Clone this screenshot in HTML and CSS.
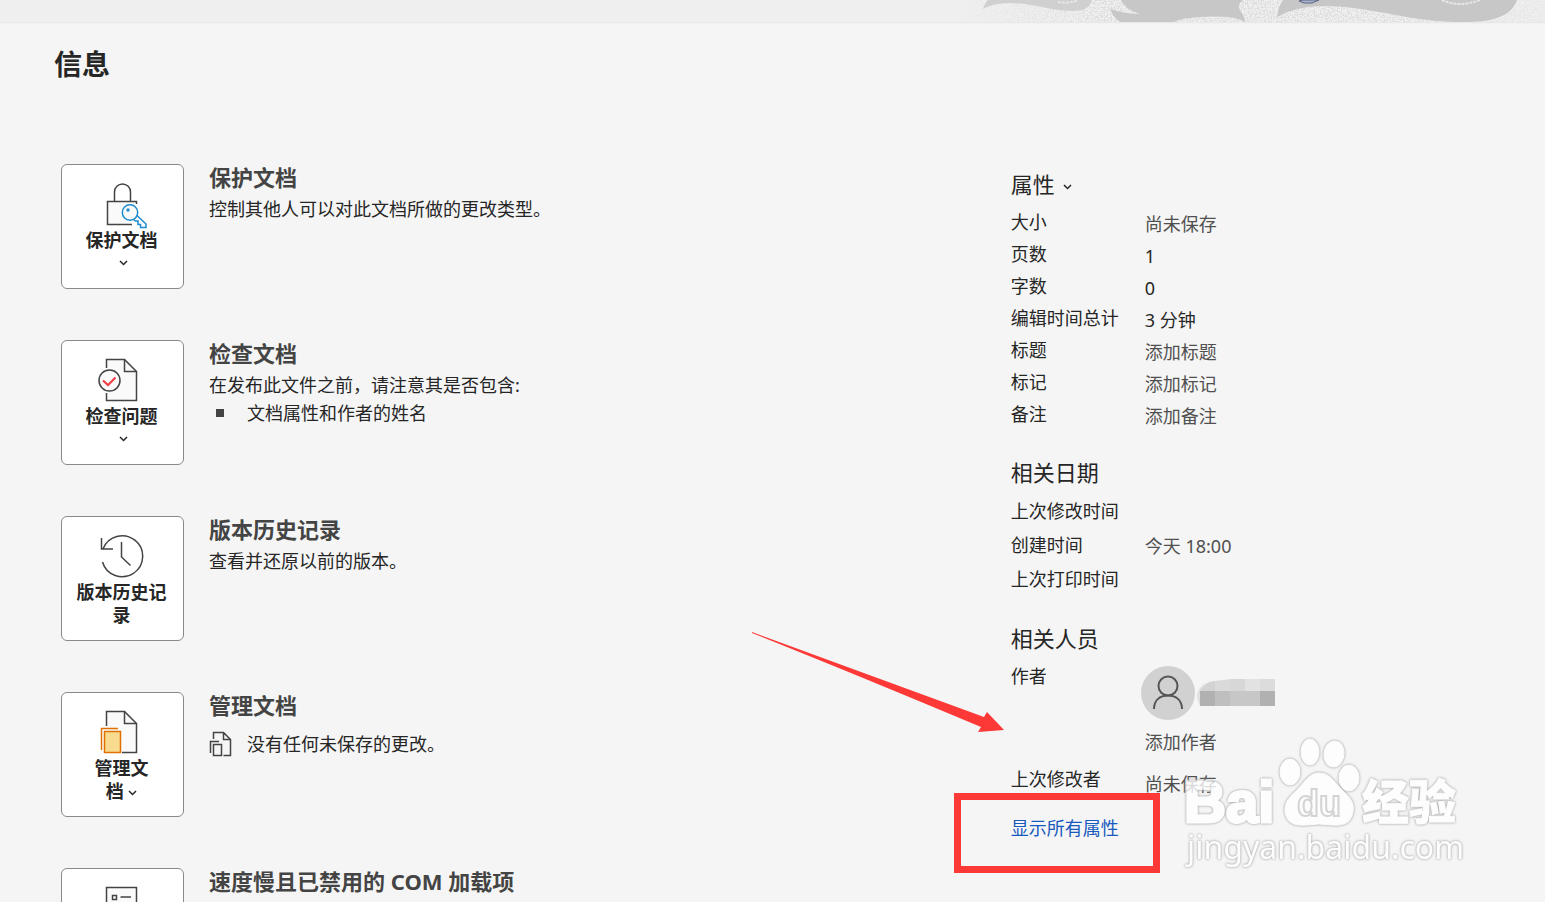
FILE: index.html
```html
<!DOCTYPE html>
<html lang="zh-CN">
<head>
    <meta charset="utf-8" />
    <meta name="viewport" content="width=device-width, initial-scale=1" />
    <title>信息</title>
    <link rel="stylesheet" href="styles.css">
</head>
<body>
    <header class="banner">
        <svg class="banner-art" width="585" height="22" viewBox="0 0 585 22" aria-hidden="true">
            <defs>
                <filter id="grain" x="0" y="0" width="100%" height="100%">
                    <feTurbulence type="fractalNoise" baseFrequency="0.7" numOctaves="2" seed="4" />
                    <feColorMatrix values="0 0 0 0 0.7  0 0 0 0 0.7  0 0 0 0 0.7  8 0 0 0 -3.8" />
                </filter>
                <linearGradient id="fade">
                    <stop offset="0" stop-color="#fff" stop-opacity="0" />
                    <stop offset="0.25" stop-color="#fff" stop-opacity="0.9" />
                    <stop offset="0.8" stop-color="#fff" stop-opacity="0.9" />
                    <stop offset="1" stop-color="#fff" stop-opacity="0.3" />
                </linearGradient>
                <mask id="grain-mask"><rect width="585" height="22" fill="url(#fade)" /></mask>
            </defs>
            <g mask="url(#grain-mask)"><rect width="585" height="22" filter="url(#grain)" /></g>
            <path d="M23 9C24 5 26 2 28 0H132C130 6 127 11 112 11C90 11 78 4 50 3Q33 3 23 9Z" fill="#d0d0d0" />
            <path d="M150 9Q165 14 180 14Q164 9 161 0H283Q276 5 281 12Q285 17 285 22Q275 15 240 17Q222 18 213 22H160Q153 17 150 9Z" fill="#c7c7c7" />
            <path d="M317 17Q318 7 323 0H557Q552 15 530 20Q505 24 468 20C420 15 360 -7 317 17Z" fill="#c7c7c7" />
            <path d="M98 2Q108 4 118 0M482 0Q499 8 520 0" fill="none" stroke="#e6e6e6" stroke-width="2" stroke-dasharray="3 1" />
            <path d="M339 1L343 0H359L352 3H344Z" fill="#a9b2cc" stroke="#5c6480" />
        </svg>
    </header>

    <main>
        <h1>信息</h1>
        <div class="columns">
            <div class="sections">
                <section class="section">
                    <button class="tile">
                        <svg class="icon" viewBox="0 0 52 48">
                            <path d="M18.500 20V11a8 8 0 0 1 16 0V20" />
                            <path class="paper" d="M40.500 23V20.500H11.500V43.500H36" />
                            <g class="key">
                                <path d="M40.500 34L50 43V46.500H44.500V43.500H42V40H39.500L37.500 38.500" />
                                <circle cx="34" cy="31.500" r="7.700" />
                                <circle cx="32" cy="29" r="1" />
                            </g>
                        </svg>
                        <span>保护文档</span>
                        <svg class="chevron" viewBox="0 0 9 6"><path d="M1 1l3.500 3.500L8 1" /></svg>
                    </button>
                    <div>
                        <h2>保护文档</h2>
                        <p>控制其他人可以对此文档所做的更改类型。</p>
                    </div>
                </section>

                <section class="section">
                    <button class="tile">
                        <svg class="icon" viewBox="0 0 52 48">
                            <path class="paper" d="M10.500 11V2.500H28.500L40.500 14.500V43.500H10.500V36" />
                            <path d="M28.500 2.500V14.500H40.500" />
                            <circle class="paper" cx="13.500" cy="23.500" r="10.500" />
                            <path class="tick" d="M7 23.500L12 28L19.500 20.500" />
                        </svg>
                        <span>检查问题</span>
                        <svg class="chevron" viewBox="0 0 9 6"><path d="M1 1l3.500 3.500L8 1" /></svg>
                    </button>
                    <div>
                        <h2>检查文档</h2>
                        <p>在发布此文件之前，请注意其是否包含:</p>
                        <ul>
                            <li>文档属性和作者的姓名</li>
                        </ul>
                    </div>
                </section>

                <section class="section">
                    <button class="tile">
                        <svg class="icon" viewBox="0 0 52 48">
                            <path d="M7 16A20.500 20.500 0 1 1 6.500 29" />
                            <path d="M5.500 5V16H17M25.500 9V24L34.500 32.500" />
                        </svg>
                        <span>版本历史记录</span>
                    </button>
                    <div>
                        <h2>版本历史记录</h2>
                        <p>查看并还原以前的版本。</p>
                    </div>
                </section>

                <section class="section">
                    <button class="tile">
                        <svg class="icon" viewBox="0 0 52 48">
                            <path class="paper" d="M10.500 17V2.500H28.500L40.500 14.500V43.500H26" />
                            <path d="M28.500 2.500V14.500H40.500" />
                            <path class="copy" d="M8.500 22.500H24.500V43.500H8.500Z" />
                            <path class="copy-back" d="M22 19.500H5.500V41" />
                        </svg>
                        <span class="narrow">管理文档 <svg class="chevron" viewBox="0 0 9 6"><path d="M1 1l3.500 3.500L8 1" /></svg></span>
                    </button>
                    <div>
                        <h2>管理文档</h2>
                        <div class="status">
                            <svg width="24" height="26" viewBox="0 0 24 26">
                                <path d="M4.500 8V1.500H14.500L21.500 8.500V24.500H14.500M14.500 1.500V8.500H21.500M4.500 13.500H12.500V24.500H4.500ZM10 10.500H1.500V22" />
                            </svg>
                            <span>没有任何未保存的更改。</span>
                        </div>
                    </div>
                </section>

                <section class="section">
                    <button class="tile" aria-label="管理 COM 加载项">
                        <svg class="icon" viewBox="0 0 52 48">
                            <path class="paper" d="M10.500 2.500H40.500V43.500H10.500Z" />
                            <path d="M16.500 10.500H20.500V14.500H16.500ZM24.500 12H35M16.500 20.500H20.500V24.500H16.500ZM24.500 22H35" />
                        </svg>
                    </button>
                    <div>
                        <h2>速度慢且已禁用的 COM 加载项</h2>
                    </div>
                </section>
            </div>

            <aside class="properties">
                <button class="group-title">属性 <svg class="chevron" viewBox="0 0 9 6"><path d="M1 1l3.500 3.500L8 1" /></svg></button>
                <table>
                    <tr><th>大小</th><td class="muted">尚未保存</td></tr>
                    <tr><th>页数</th><td>1</td></tr>
                    <tr><th>字数</th><td>0</td></tr>
                    <tr><th>编辑时间总计</th><td>3 分钟</td></tr>
                    <tr><th>标题</th><td class="muted">添加标题</td></tr>
                    <tr><th>标记</th><td class="muted">添加标记</td></tr>
                    <tr><th>备注</th><td class="muted">添加备注</td></tr>
                </table>

                <h3 class="group-title">相关日期</h3>
                <table class="dates">
                    <tr><th>上次修改时间</th><td></td></tr>
                    <tr><th>创建时间</th><td class="muted">今天 18:00</td></tr>
                    <tr><th>上次打印时间</th><td></td></tr>
                </table>

                <h3 class="group-title">相关人员</h3>
                <table class="people">
                    <tr>
                        <th>作者</th>
                        <td class="muted">
                            <div class="author">
                                <svg width="54" height="54" viewBox="0 0 54 54">
                                    <circle cx="27" cy="27" r="27" fill="#d1d1d1" />
                                    <g fill="none" stroke="#555" stroke-width="2">
                                        <circle cx="27" cy="20" r="9.500" />
                                        <path d="M13 43C13 34 19 29.500 27 29.500S41 34 41 43" />
                                    </g>
                                </svg>
                                <svg width="78" height="30" viewBox="0 0 78 30">
                                    <path d="M3 28Q0 23 0 17Q3 4 18 3L33 1V28Z" fill="#e0e0e0" />
                                    <path d="M3 13Q8 4 18 3V13Z" fill="#d3d3d3" />
                                    <path d="M18 3L33 2V13H18Z" fill="#dadada" />
                                    <path d="M33 1H48V13H33Z" fill="#d7d7d7" />
                                    <path d="M48 1H63V13H48Z" fill="#e2e2e2" />
                                    <path d="M63 1H78V13H63Z" fill="#dcdcdc" />
                                    <path d="M3 13H18V28H3ZM63 13H78V28H63Z" fill="#b1b1b1" />
                                    <path d="M18 13H33V28H18Z" fill="#bfbfbf" />
                                    <path d="M33 13H63V28H33Z" fill="#c7c7c7" />
                                </svg>
                            </div>
                            添加作者
                        </td>
                    </tr>
                    <tr><th>上次修改者</th><td class="muted">尚未保存</td></tr>
                </table>
                <a class="show-all" href="#">显示所有属性</a>

                <div class="highlight"></div>
                <svg class="arrow" width="254" height="104" viewBox="0 0 254 104">
                    <path d="M2 2L234 87L237 82L254 100L228 102L231 97Q100 42 2 3Z" fill="#fc3936" />
                </svg>
                <svg class="watermark" width="290" height="140" viewBox="0 0 290 140">
                    <g class="wm">
                        <text class="wm-logo" x="4" y="87">Bai</text>
                        <ellipse cx="110" cy="37" rx="10" ry="13" />
                        <ellipse cx="130" cy="17" rx="9" ry="13" />
                        <ellipse cx="154" cy="19" rx="10" ry="13" transform="rotate(8 154 19)" />
                        <ellipse cx="169" cy="43" rx="10" ry="13" />
                        <path d="M139 38C149 38 153 45 160 53C168 61 175 66 173 77C170 94 155 90 139 89C123 90 108 94 105 77C104 66 111 61 119 53C126 45 130 38 139 38Z" />
                        <text class="wm-cjk" x="182" y="84">经验</text>
                        <text class="wm-url" x="7" y="124">jingyan.baidu.com</text>
                    </g>
                    <text class="wm-du" x="117" y="81">du</text>
                </svg>
            </aside>
        </div>
    </main>
</body>
</html>
```
FILE: styles.css
```css
html, body {
    margin: 0;
    height: 100%;
}

body {
    overflow: hidden;
    background-color: #f5f5f5;
    color: #262626;
    font: 18px "Noto Sans", "Noto Sans CJK SC", sans-serif;
}

h1, h2, h3, p, ul {
    margin: 0;
    padding: 0;
}

button {
    color: inherit;
    font: inherit;
    cursor: pointer;
}

.banner {
    display: flex;
    justify-content: flex-end;
    height: 22px;
    background-color: #efefef;
    box-shadow: 0 0 2px #ccc;
    overflow: hidden;
}

main {
    padding: 22px 0 0 54px;
}

h1 {
    font-size: 28px;
    line-height: 40px;
}

.columns {
    display: grid;
    grid-template-columns: 16fr 9fr;
    margin-top: 80px;
    padding-left: 7px;
}

.sections {
    display: flex;
    flex-direction: column;
    gap: 51px;
}

.section {
    display: flex;
    gap: 25px;
}

.tile {
    display: flex;
    flex-direction: column;
    align-items: center;
    flex: none;
    box-sizing: border-box;
    width: 123px;
    height: 125px;
    padding: 16px 13px 0 11px;
    border: 1px solid #8a8a8a;
    border-radius: 6px;
    background-color: #fff;
    font-weight: bold;
    line-height: 23px;
}

.tile .narrow {
    width: 64px;
}

svg {
    flex: none;
}

.icon {
    width: 52px;
    height: 48px;
    fill: none;
    stroke: #444;
    stroke-width: 1.5;
}

.icon .paper {
    fill: #fafafa;
}

.icon .key {
    fill: #fafafa;
    stroke: #1e8bcd;
}

.icon .tick {
    stroke: #f03a45;
    stroke-width: 2;
}

.icon .copy {
    fill: #f9db8f;
    stroke: #e07000;
}

.icon .copy-back {
    stroke: #e07000;
}

.chevron {
    width: 9px;
    height: 6px;
    fill: none;
    stroke: #262626;
    stroke-width: 1.5;
}

.tile > .chevron {
    margin: 8px 0 0 3px;
}

.narrow .chevron {
    vertical-align: middle;
}

h2 {
    margin-bottom: 5px;
    color: #444;
    font-size: 22px;
    line-height: 26px;
}

p, li {
    line-height: 28px;
}

ul {
    list-style: none;
}

li {
    display: flex;
    align-items: center;
    gap: 23px;
    padding-left: 7px;
}

li::before {
    content: "";
    width: 8px;
    height: 8px;
    background-color: #444;
}

.status {
    display: flex;
    align-items: center;
    gap: 14px;
    margin-top: 12px;
    line-height: 28px;
}

.status svg {
    fill: none;
    stroke: #444;
    stroke-width: 1.5;
}

.properties {
    position: relative;
    padding-top: 4px;
}

.group-title {
    display: block;
    margin: 26px 0 6px;
    padding: 0;
    border: 0;
    background: none;
    font-size: 22px;
    font-weight: normal;
    line-height: 32px;
}

button.group-title {
    margin-top: 0;
}

.group-title .chevron {
    margin-left: 3px;
    vertical-align: middle;
}

table {
    border-collapse: collapse;
}

th, td {
    padding: 0;
    line-height: 32px;
    text-align: left;
    vertical-align: top;
}

th {
    width: 134px;
    font-weight: normal;
}

td {
    padding-top: 4px;
    line-height: 28px;
}

.muted {
    color: #505050;
}

.dates th {
    line-height: 34px;
}

.people td {
    padding-top: 6px;
}

.people tr + tr > * {
    padding-top: 7px;
    line-height: 32px;
}

.people tr + tr > td {
    padding-top: 12px;
}

.author {
    display: flex;
    align-items: center;
    gap: 2px;
    margin: 0 0 8px -4px;
}

.show-all {
    display: inline-block;
    margin-top: 12px;
    color: #185abd;
    line-height: 32px;
    text-decoration: none;
}

/* markup drawn over the panel */
.highlight {
    position: absolute;
    top: 629px;
    left: -57px;
    box-sizing: border-box;
    width: 206px;
    height: 80px;
    border: 7px solid #fc3936;
}

.arrow {
    position: absolute;
    top: 466px;
    left: -261px;
}

.watermark {
    position: absolute;
    top: 571px;
    left: 169px;
    pointer-events: none;
    opacity: 0.8;
}

.wm {
    fill: #fff;
    stroke: #fff;
    filter: drop-shadow(0 0 1px #999) drop-shadow(0 0 1px #ccc);
}

.wm-logo {
    font: bold 58px "Liberation Sans", sans-serif;
    stroke-width: 3;
}

.wm-du {
    font: bold 36px "Liberation Sans", sans-serif;
    fill: #fff;
    stroke: #ccc;
    stroke-width: 2;
}

.wm-cjk {
    font: 900 47px "Noto Sans CJK SC", sans-serif;
}

.wm-url {
    font: 32px "Noto Sans", sans-serif;
    stroke-width: 0;
}
```
